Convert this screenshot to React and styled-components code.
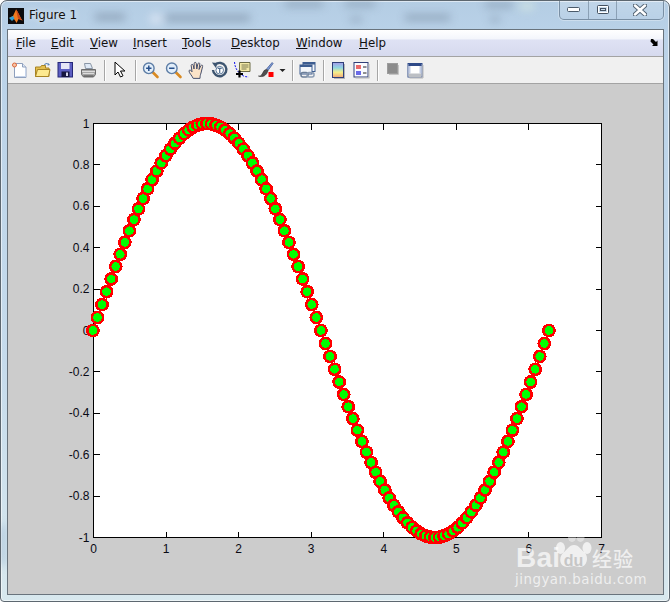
import React from 'react';
import styled, { createGlobalStyle } from 'styled-components';

const Global = createGlobalStyle`
  html, body { margin: 0; padding: 0; background: #fff; }
  #root { width: 671px; height: 602px; overflow: hidden; }
`;

const Frame = styled.div`
  position: relative; box-sizing: border-box; width: 670px; height: 602px;
  display: flex; flex-direction: column; overflow: hidden;
  border: 1px solid #5d6770; border-radius: 7px 7px 4px 4px;
  background: linear-gradient(180deg, #b4cde4 0%, #bad2e8 6%, #c6dbec 60%, #d8e8ee 100%);
  box-shadow: inset 0 0 0 1px rgba(255,255,255,.55);
`;
const Glass = styled.svg`position: absolute; left: -1px; top: -1px; width: 671px; height: 602px; pointer-events: none;`;
const TitleBar = styled.div`
  position: relative; height: 28px; display: flex; align-items: flex-start; flex: none;
`;
const AppIcon = styled.svg`width: 16px; height: 16px; margin: 7px 0 0 7px; flex: none;`;
const Title = styled.div`
  margin: 7px 0 0 5px; font: 12px "DejaVu Sans", sans-serif; color: #14100c;
  text-shadow: 0 0 6px rgba(255,255,255,.9);
`;
const Controls = styled.div`
  margin: -1px 5px 0 auto; height: 20px; display: flex; box-sizing: border-box;
  border: 1px solid rgba(80,100,120,.6); border-top: none; border-radius: 0 0 5px 5px;
  box-shadow: 0 0 0 1px rgba(255,255,255,.3);
`;
const Control = styled.div`
  width: ${p => p.$w}px; height: 100%; display: flex; align-items: center; justify-content: center;
  border-left: ${p => p.$first ? 'none' : '1px solid rgba(80,100,120,.45)'};
  background: linear-gradient(180deg, rgba(255,255,255,.18), rgba(255,255,255,.04));
`;
const Client = styled.div`
  position: relative; z-index: 1; flex: 1; margin: 0 5px 6px 6px; display: flex; flex-direction: column;
  border: 1px solid #69737c; min-height: 0; background: #ccc;
`;
const MenuBar = styled.div`
  height: 26px; flex: none; display: flex; align-items: center; position: relative;
  background: linear-gradient(180deg, #fff 0%, #f3f5fb 36%, #dfe2f4 37%, #d6daee 100%);
  font: 11.8px "DejaVu Sans", sans-serif; color: #111;
`;
const MenuItem = styled.span`width: ${p => p.$w}px; padding-left: 8px; box-sizing: border-box; flex: none;`;
const Key = styled.span`text-decoration: underline; text-underline-offset: 1px;`;
const Dock = styled.svg`position: absolute; right: 3px; top: 8px; width: 10px; height: 9px;`;
const ToolBar = styled.div`
  height: 26px; flex: none; display: flex; align-items: center; background: #f0f0f0;
  border-top: 1px solid #a3a3a3; border-bottom: 1px solid #a3a3a3;
`;
const Tool = styled.svg`width: 23px; height: 18px; flex: none;`;
const Caret = styled.svg`width: 11px; height: 18px; flex: none;`;
const Sep = styled.div`
  width: 8px; height: 21px; flex: none; display: flex; justify-content: center;
  &::before { content: ""; width: 1px; background: #a6a6a6; box-shadow: 1px 0 0 #fff; }
`;
const Canvas = styled.div`flex: 1; min-height: 0; position: relative; background: #ccc;`;
const Chart = styled.svg`display: block; width: 655px; height: 510px;`;
const TickText = styled.text`font: 12px "Liberation Sans", Arial, sans-serif; fill: #0a0a14;`;

const S = { strokeLinejoin: 'round', strokeLinecap: 'round' };
const icon = (children, key) => <Tool key={key} viewBox="-3.5 -1 23 18">{children}</Tool>;

const NewIcon = () => icon(<>
  <path d="M3 1.500h8l3.500 3.500v10.500H3z" fill="#fff" stroke="#8fa0bd" />
  <path d="M11 1.500V5h3.500" fill="#dfe8f6" stroke="#8fa0bd" />
  <path d="M4 14.500h10V6" fill="none" stroke="#c5d3ea" />
  <circle cx="3" cy="3" r="2" fill="#f5c6a8" stroke="#e0683a" />
</>);
const OpenIcon = () => icon(<>
  <path d="M1 14.500V5h5l1-1.500h4V6h3.500v8.500z" fill="#e4bf4e" stroke="#a88423" />
  <path d="M1 14.500L3 7.500h12.500l-1.500 7z" fill="#fde98f" stroke="#a88423" />
  <path d="M10 3c1-2 3-2 4.500 0" fill="none" stroke="#5c86b8" strokeWidth="1.200" />
  <path d="M13.500 1l2 2-2.500.6z" fill="#5c86b8" />
</>);
const SaveIcon = () => icon(<>
  <rect x=".5" y=".5" width="14.500" height="14.500" fill="#5c5ec2" stroke="#262878" />
  <rect x="3.500" y="1" width="8.500" height="6" fill="#e6e6f6" />
  <rect x="4" y="9.500" width="8" height="5.500" fill="#15153f" />
  <rect x="8.500" y="10.500" width="2" height="3.500" fill="#d6d6ee" />
</>);
const PrintIcon = () => icon(<>
  <path d="M4 1.500h6l2 5H5z" fill="#dfe9f5" stroke="#8a96a5" />
  <path d="M1 7.500h14v5l-2 2.500H3l-2-2.500z" fill="#a6a6a6" stroke="#6c6c6c" />
  <path d="M1.500 9.500h13M2.500 11.500h11" stroke="#dcdcdc" />
  <path d="M3 14h10" stroke="#4e4e4e" />
</>);
const PointerIcon = () => <Tool viewBox="-4.500 -1 23 18">
  <path d="M2.500.5v12.500l3-3 2.500 5 2.500-1.200-2.500-4.800h4z" fill="#fff" stroke="#000" {...S} />
</Tool>;
const Mag = ({ sign }) => <>
  <path d="M10 10l5 5" stroke="#d98a22" strokeWidth="2.600" strokeLinecap="round" />
  <circle cx="6.300" cy="6.300" r="5.300" fill="#e2eefa" stroke="#5e7ea6" strokeWidth="1.400" />
  <path d={sign === '+' ? 'M3.600 6.300h5.400M6.300 3.600v5.400' : 'M3.600 6.300h5.400'} stroke="#27508c" strokeWidth="1.500" />
</>;
const ZoomIn = () => icon(<Mag sign="+" />);
const ZoomOut = () => icon(<Mag sign="-" />);
const Hand = () => <Tool viewBox="-3.500 -1 23 18">
  <path d="M4.500 16c-1-2.500-4-5-4-7 0-1.400 1.800-1.200 3 .8L2.700 3.500c0-1.500 1.800-1.500 2.100 0L5.500 7 5.700 1.500c0-1.500 2-1.500 2.100 0L8.300 7l1-5c.3-1.500 2.200-1.200 2-0l-.8 5.500 1.800-3.700c.6-1.300 2.400-.6 1.800.7L12.500 11c-.6 1.700-.9 3-1 5z" fill="#fbe3c8" stroke="#47506c" strokeWidth="1" {...S} />
</Tool>;
const Rotate = () => icon(<>
  <path d="M3.600 2.700A6.700 6.700 0 1 1 1.500 8" fill="none" stroke="#3d5570" strokeWidth="2.400" />
  <path d="M.4.6L6 1l-1.600 5z" fill="#3d5570" />
  <circle cx="8.200" cy="8.200" r="3.800" fill="#fff" stroke="#5c7a9c" />
  <path d="M6.200 6.400h4M8.200 6.400V11" stroke="#4c6a8c" strokeWidth="1.200" />
</>);
const DataCursor = () => icon(<>
  <path d="M0 0c.5 6 3 11 10 14.500l4 .5" fill="none" stroke="#1414ee" strokeDasharray="2 1.200" />
  <path d="M5 .5h10.500v9H5z" fill="#f3e9a6" stroke="#6b6a45" />
  <path d="M7 3h7M7 5h7M7 7h5" stroke="#7c7a52" />
  <path d="M5 8.500v7M1.500 12h7" stroke="#000" strokeWidth="2.200" />
</>);
const Brush = () => icon(<>
  <path d="M9 7l5.600-6.500 1 1L10.500 8.500z" fill="#7d9bd4" stroke="#3c5590" strokeWidth=".7" />
  <path d="M9 7.500c-3 0-3 3-5 5.500-1.500 1.800-3.500 1-3 1 4 1.500 8 0 9.500-5.500z" fill="#4f4f4f" stroke="#2a2a2a" strokeWidth=".6" />
  <rect x="11" y="10" width="5" height="5" fill="#f00" />
</>);
const LinkIcon = () => icon(<>
  <rect x="3.500" y=".5" width="12" height="9" fill="#f4f7fb" stroke="#3d5d90" />
  <rect x="3.500" y=".5" width="12" height="2" fill="#3d5d90" />
  <rect x=".5" y="3" width="12" height="9" fill="#f4f7fb" stroke="#3d5d90" />
  <rect x=".5" y="3" width="12" height="2" fill="#3d5d90" />
  <rect x="1.500" y="10.500" width="7" height="4.500" rx="2" fill="none" stroke="#6b7e98" strokeWidth="1.500" />
  <rect x="7.500" y="10.500" width="7" height="4.500" rx="2" fill="none" stroke="#8b9cb3" strokeWidth="1.500" />
</>);
const ColorbarIcon = () => <Tool viewBox="-5 -1 23 18">
  <defs><linearGradient id="cb" x1="0" y1="0" x2="0" y2="1">
    <stop offset="0" stopColor="#a59bea" /><stop offset=".35" stopColor="#8fd6e0" />
    <stop offset=".65" stopColor="#f4f08c" /><stop offset="1" stopColor="#f2a878" />
  </linearGradient></defs>
  <rect x=".5" y=".5" width="11" height="15" fill="url(#cb)" stroke="#2f3f78" />
  <path d="M12.500 2v15M2 16.500h11" stroke="#b6b6b6" />
</Tool>;
const LegendIcon = () => icon(<>
  <rect x=".5" y=".5" width="14" height="14.500" fill="#fafbff" stroke="#2f3f78" />
  <rect x="2.500" y="3" width="5" height="4" fill="#ea6a6a" />
  <rect x="2.500" y="9" width="5" height="4" fill="#6a6ae8" />
  <path d="M9.500 5h3.500M9.500 11h3.500" stroke="#222" />
  <path d="M15.500 2v14M2 16h14" stroke="#b6b6b6" />
</>);
const HideIcon = () => <Tool viewBox="-6 -1 23 18">
  <rect x=".5" y="1.500" width="10" height="10" fill="#8c8c8c" stroke="#9c9c9c" />
  <path d="M11.500 3v9.500H2" fill="none" stroke="#c4c4c4" />
</Tool>;
const ToolsIcon = () => icon(<>
  <rect x=".5" y="1.500" width="14" height="13.500" fill="#fff" stroke="#2f4a88" />
  <rect x="1" y="1.500" width="13" height="2.500" fill="#2f4a88" />
  <path d="M1 4h2v7.500H1zM12 4h2v7.500h-2z" fill="#c3cce2" />
  <path d="M1 11.500h13V15H1z" fill="#bcbfc4" />
  <path d="M15.500 3v13H2" fill="none" stroke="#b6b6b6" />
</>);

const AX = { l: 93.5, r: 601.5, t: 123.5, b: 537.5 };
const px = x => AX.l + (x / 7) * (AX.r - AX.l);
const py = y => (AX.t + AX.b) / 2 - y * (AX.b - AX.t) / 2;

const samples = Array.from({ length: 101 }, (_, i) => {
  const x = i * Math.PI * 2 / 100;
  return [px(x) - 0.6, py(Math.sin(x))];
});
const menus = [['F', 'ile', 35], ['E', 'dit', 39], ['V', 'iew', 43], ['I', 'nsert', 49], ['T', 'ools', 49], ['D', 'esktop', 65], ['W', 'indow', 63], ['H', 'elp', 50]];
const xTicks = [0, 1, 2, 3, 4, 5, 6, 7];
const yTicks = [1, .8, .6, .4, .2, 0, -.2, -.4, -.6, -.8, -1];

const Plot = () => (
  <Chart viewBox="8 84 655 510">
    <rect x={AX.l} y={AX.t} width={AX.r - AX.l} height={AX.b - AX.t} fill="#fff" stroke="#000" shapeRendering="crispEdges" />
    <g stroke="#000" shapeRendering="crispEdges">
      {xTicks.slice(1, -1).map(t => <path key={t} d={`M${px(t)} ${AX.b}v-6M${px(t)} ${AX.t}v6`} />)}
      {yTicks.slice(1, -1).map(t => <path key={t} d={`M${AX.l} ${py(t)}h6M${AX.r} ${py(t)}h-6`} />)}
    </g>
    {xTicks.map(t => <TickText key={t} x={px(t)} y="553" textAnchor="middle">{t}</TickText>)}
    {yTicks.map(t => <TickText key={t} x="89.500" y={py(t) + 4} textAnchor="end">{t}</TickText>)}
    <g fill="#00ff00" stroke="#ff0000" strokeWidth="2.600" shapeRendering="crispEdges">
      {samples.map(([x, y], i) => <circle key={i} cx={x} cy={y} r="5.600" />)}
    </g>
  </Chart>
);

const WmText = styled.div`
  position: absolute; left: 515px; top: 544px; width: 125px; height: 46px; color: rgba(255,255,255,.7); z-index: 5;
`;
const WmRow = styled.div`display: flex; align-items: center; height: 26px;`;
const WmBai = styled.span`font: bold 28px "Liberation Sans", sans-serif; letter-spacing: .2px; width: 43px; flex: none;`;
const WmDu = styled.span`
  display: inline-flex; align-items: flex-end; justify-content: center; width: 29px; height: 20px; flex: none;
  color: #c6c6c6; font: bold 16px/19px "Liberation Sans", sans-serif; position: relative; z-index: 1; top: 2px;
`;
const WmCn = styled.span`font: 500 20px "Noto Sans CJK SC", sans-serif; margin-left: 4px; letter-spacing: 1px; white-space: nowrap;`;
const WmDomain = styled.div`font: 13.400px "DejaVu Sans", sans-serif; letter-spacing: .5px; margin-top: 1px; margin-left: -1px; white-space: nowrap;`;
const WmPaw = styled.svg`position: absolute; left: 38px; top: -16px; width: 40px; height: 40px;`;

function WatermarkText() {
  return (
    <WmText>
      <WmPaw viewBox="0 0 40 40" fill="currentColor">
        <ellipse cx="6.500" cy="19" rx="4.500" ry="6" />
        <ellipse cx="18" cy="7" rx="4.200" ry="6" opacity=".55" />
        <ellipse cx="26.500" cy="7" rx="4.200" ry="6" opacity=".55" />
        <ellipse cx="33" cy="19" rx="4.500" ry="6" />
        <path d="M20 16c5 0 7 5 11 8 4 4 2 14-5 14-3 0-4-1-6-1s-4 1-7 1c-7 0-9-9-4-14 4-3 6-8 11-8z" />
      </WmPaw>
      <WmRow><WmBai>Bai</WmBai><WmDu>du</WmDu><WmCn>经验</WmCn></WmRow>
      <WmDomain>jingyan.baidu.com</WmDomain>
    </WmText>
  );
}

export default function App() {
  return (
    <>
      <Global />
      <Frame>
        <Glass viewBox="0 0 671 602">
          <defs><filter id="b" x="-50%" y="-150%" width="200%" height="400%"><feGaussianBlur stdDeviation="4.500" /></filter></defs>
          <g filter="url(#b)" fill="#7f93a8" opacity=".6">
            <rect x="95" y="13" width="30" height="8" />
            <rect x="165" y="14" width="85" height="8" />
            <rect x="285" y="1" width="38" height="6" />
            <rect x="345" y="1" width="30" height="6" />
            <rect x="405" y="14" width="45" height="7" />
            <rect x="485" y="2" width="28" height="6" />
            <rect x="350" y="17" width="12" height="5" />
            <rect x="490" y="17" width="10" height="5" />
            <rect x="150" y="14" width="12" height="10" fill="#e9eef8" />
            <rect x="520" y="2" width="14" height="8" fill="#dbeee2" />
            <rect x="0" y="525" width="5" height="40" fill="#8aa8c8" />
          </g>
        </Glass>
        <TitleBar>
          <AppIcon viewBox="0 0 16 16">
            <rect width="16" height="16" fill="#0b0b0d" />
            <path d="M1 10l4-2 3-6.500c1.500 1 3 6 6.500 11l-4-1.500-2 4c-1-2-2-4-3.500-4.500z" fill="#ee7a1e" />
            <path d="M1 10l4-2 1.500 2.500L4 13z" fill="#2e9fd6" />
            <path d="M8 1.500c1.500 1 3 6 6.500 11L10 10.500z" fill="#c9471a" />
          </AppIcon>
          <Title>Figure 1</Title>
          <Controls>
            <Control $w={28} $first>
              <svg width="14" height="6" viewBox="0 0 14 6"><rect x=".5" y=".5" width="12" height="4" rx="1" fill="#fff" stroke="#4a5a6a" /></svg>
            </Control>
            <Control $w={27}>
              <svg width="14" height="12" viewBox="0 0 14 12"><rect x="1.500" y="1.500" width="11" height="8" rx="1" fill="#c9dcec" stroke="#44515f" /><rect x="2.500" y="2.500" width="9" height="6" fill="none" stroke="#fff" /><rect x="4.500" y="4.500" width="5" height="2" fill="none" stroke="#44515f" /></svg>
            </Control>
            <Control $w={46}>
              <svg width="14" height="12" viewBox="0 0 14 12"><path d="M2 1.500l10 9M12 1.500l-10 9" stroke="#566676" strokeWidth="4.500" strokeLinecap="round" /><path d="M2 1.500l10 9M12 1.500l-10 9" stroke="#fff" strokeWidth="2.500" strokeLinecap="round" /></svg>
            </Control>
          </Controls>
        </TitleBar>
        <Client>
          <MenuBar>
            {menus.map(([k, rest, w]) => <MenuItem key={k} $w={w}><Key>{k}</Key>{rest}</MenuItem>)}
            <Dock viewBox="0 0 10 9"><path d="M1 1h2l3 3 1.500-1.500V8H2l1.500-1.500-3-3z" fill="#000" /></Dock>
          </MenuBar>
          <ToolBar>
            <NewIcon /><OpenIcon /><SaveIcon /><PrintIcon />
            <Sep />
            <PointerIcon />
            <Sep />
            <ZoomIn /><ZoomOut /><Hand /><Rotate /><DataCursor /><Brush />
            <Caret viewBox="0 0 11 18"><path d="M2.500 8h6l-3 3z" fill="#222" /></Caret>
            <Sep />
            <LinkIcon />
            <Sep />
            <ColorbarIcon /><LegendIcon />
            <Sep />
            <HideIcon /><ToolsIcon />
          </ToolBar>
          <Canvas><Plot /></Canvas>
        </Client>
        <WatermarkText />
      </Frame>
    </>
  );
}
